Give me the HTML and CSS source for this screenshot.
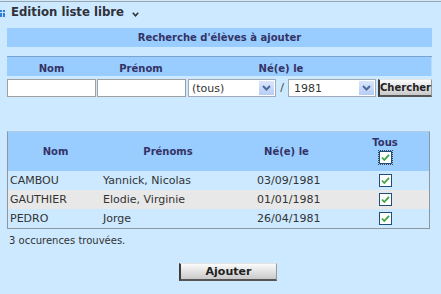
FILE: index.html
```html
<!DOCTYPE html>
<html lang="fr">
<head>
<meta charset="utf-8">
<title>Edition liste libre</title>
<link rel="stylesheet" href="styles.css">
</head>
<body>
<div class="page">
  <div class="title-row">
    <svg class="ico" width="5" height="7" viewBox="0 0 5 7"><rect width="5" height="7" fill="#2f7fd6"/><rect x="0" y="2" width="5" height="1" fill="#bfe0ff"/><rect x="2" y="0" width="1" height="7" fill="#bfe0ff"/></svg>
    <span class="title">Edition liste libre</span>
    <svg class="chev" width="7" height="5" viewBox="0 0 7 5"><polyline points="0.8,0.8 3.5,3.8 6.2,0.8" fill="none" stroke="#333" stroke-width="1.6"/></svg>
  </div>

  <div class="bar">Recherche d'élèves à ajouter</div>

  <div class="search">
    <div class="s-head">
      <div>Nom</div>
      <div>Prénom</div>
      <div>Né(e) le</div>
      <div></div>
    </div>
    <div class="s-row">
      <input class="txt first" type="text">
      <input class="txt second" type="text">
      <div class="sel sel-day"><span class="sel-val">(tous)</span><span class="sel-btn"><svg width="15" height="15" viewBox="0 0 15 15"><polyline points="4,6 7.5,9.5 11,6" fill="none" stroke="#4d6a9c" stroke-width="2"/></svg></span></div>
      <span class="slash">/</span>
      <div class="sel sel-year"><span class="sel-val">1981</span><span class="sel-btn"><svg width="15" height="15" viewBox="0 0 15 15"><polyline points="4,6 7.5,9.5 11,6" fill="none" stroke="#4d6a9c" stroke-width="2"/></svg></span></div>
      <button class="btn chercher" type="button"><span>Chercher</span></button>
    </div>
  </div>

  <div class="results">
    <div class="grid r-head">
      <div class="h">Nom</div>
      <div class="h">Prénoms</div>
      <div class="h">Né(e) le</div>
      <div class="h tous"><span>Tous</span><span class="cb focus"><svg width="13" height="13" viewBox="0 0 13 13"><rect x="0.5" y="0.5" width="12" height="12" fill="#fff" stroke="#1c4f7c"/><polyline points="3,6.5 5.3,9 10,3.8" fill="none" stroke="#3ea63e" stroke-width="1.8"/></svg></span></div>
    </div>
    <div class="grid r-row">
      <div class="nom">CAMBOU</div>
      <div class="pre">Yannick, Nicolas</div>
      <div class="date">03/09/1981</div>
      <div class="chk"><svg width="13" height="13" viewBox="0 0 13 13"><rect x="0.5" y="0.5" width="12" height="12" fill="#fff" stroke="#1c4f7c"/><polyline points="3,6.5 5.3,9 10,3.8" fill="none" stroke="#3ea63e" stroke-width="1.8"/></svg></div>
    </div>
    <div class="grid r-row alt">
      <div class="nom">GAUTHIER</div>
      <div class="pre">Elodie, Virginie</div>
      <div class="date">01/01/1981</div>
      <div class="chk"><svg width="13" height="13" viewBox="0 0 13 13"><rect x="0.5" y="0.5" width="12" height="12" fill="#fff" stroke="#1c4f7c"/><polyline points="3,6.5 5.3,9 10,3.8" fill="none" stroke="#3ea63e" stroke-width="1.8"/></svg></div>
    </div>
    <div class="grid r-row">
      <div class="nom">PEDRO</div>
      <div class="pre">Jorge</div>
      <div class="date">26/04/1981</div>
      <div class="chk"><svg width="13" height="13" viewBox="0 0 13 13"><rect x="0.5" y="0.5" width="12" height="12" fill="#fff" stroke="#1c4f7c"/><polyline points="3,6.5 5.3,9 10,3.8" fill="none" stroke="#3ea63e" stroke-width="1.8"/></svg></div>
    </div>
  </div>

  <p class="count">3 occurences trouvées.</p>

  <div class="actions"><button class="btn ajouter" type="button">Ajouter</button></div>
</div>
</body>
</html>
```
FILE: styles.css
```css
html, body {
  margin: 0;
  padding: 0;
}
body {
  background: #cce9ff;
  font-family: "DejaVu Sans", Verdana, sans-serif;
  color: #333;
  overflow: hidden;
}
.page {
  margin-top: 1px;
  border-top: 1px solid #9ea6ad;
}
.title-row {
  display: flex;
  align-items: center;
  height: 20px;
}
.ico {
  display: block;
  margin-top: 3px;
  flex: none;
}
.title {
  margin-left: 6px;
  font-family: "DejaVu Sans Condensed", "DejaVu Sans", sans-serif;
  font-weight: bold;
  font-size: 13px;
  line-height: 20px;
  color: #30323a;
}
.chev {
  display: block;
  margin-left: 8px;
  margin-top: 5px;
}
.bar {
  margin: 6px 0 0 7px;
  width: 425px;
  height: 19px;
  background: #99ccff;
  color: #333366;
  font-weight: bold;
  font-size: 10px;
  line-height: 19px;
  text-align: center;
}
.search {
  margin: 9px 0 0 7px;
  width: 425px;
  border-top: 1px solid #7ba3cf;
}
.s-head {
  display: grid;
  grid-template-columns: 89px 90px 190px 1fr;
  height: 19px;
  background: #99ccff;
  border-right: 1px solid #b8dcff;
  box-sizing: border-box;
  color: #333366;
  font-weight: bold;
  font-size: 10px;
  line-height: 12px;
  text-align: center;
}
.s-head > div {
  padding-top: 6px;
}
.s-row {
  display: flex;
  align-items: stretch;
  height: 18px;
  margin-top: 3px;
}
.txt {
  box-sizing: border-box;
  height: 18px;
  margin: 0;
  padding: 0;
  border: 1px solid #a0a0a0;
  background: #fff;
  font-size: 11px;
}
.txt.first {
  width: 89px;
  margin-right: 1px;
}
.txt.second {
  width: 89px;
  margin-right: 2px;
}
.sel {
  box-sizing: border-box;
  width: 88px;
  height: 18px;
  border: 1px solid #a0a9b5;
  background: #fff;
  display: flex;
  align-items: center;
  justify-content: space-between;
  font-size: 11px;
  color: #333;
}
.sel-day .sel-val {
  padding-left: 3px;
}
.sel-year .sel-val {
  padding-left: 5px;
}
.sel-btn {
  display: block;
  width: 15px;
  height: 14px;
  margin-right: 1px;
  background: linear-gradient(#dbe6fb, #b6cdf4);
  border: 0;
}
.sel-btn svg {
  display: block;
  margin-top: -1px;
}
.slash {
  width: 12px;
  text-align: center;
  font-size: 11px;
  line-height: 18px;
  color: #444;
}
.btn {
  box-sizing: border-box;
  margin: 0;
  padding: 0;
  background: linear-gradient(#fbfbfb, #c9c9c9);
  border-top: 1px solid #e4e4e4;
  border-right: 1px solid #9a9a9a;
  border-bottom: 2px solid #555;
  border-left: 2px solid #3c3c3c;
  color: #222;
  font-family: "DejaVu Sans", Verdana, sans-serif;
  font-weight: bold;
  cursor: pointer;
}
.chercher {
  width: 54px;
  height: 18px;
  margin-left: 2px;
  font-size: 10px;
  white-space: nowrap;
  line-height: 14px;
  display: flex;
  justify-content: center;
  align-items: center;
}
.chercher span {
  flex: none;
}
.results {
  margin: 34px 0 0 7px;
  width: 423px;
  box-sizing: border-box;
  border: 1px solid #8f969e;
  border-top-color: #b0cbe6;
}
.grid {
  display: grid;
  grid-template-columns: 95px 130px 107px 1fr;
}
.r-head {
  height: 39px;
  background: #99ccff;
  color: #333366;
  font-weight: bold;
  font-size: 10px;
  align-items: center;
  text-align: center;
}
.h.tous {
  align-self: start;
  display: flex;
  flex-direction: column;
  align-items: center;
  padding-top: 5px;
  line-height: 12px;
  padding-left: 1px;
}
.cb {
  display: block;
  margin-top: 2px;
  height: 13px;
}
.cb svg {
  display: block;
}
.cb.focus {
  outline: 1px dotted #444;
  outline-offset: 0px;
}
.r-row {
  height: 19px;
  align-items: center;
  font-size: 11px;
  color: #333;
}
.r-row.alt {
  background: #e8e8e8;
}
.nom {
  padding-left: 2px;
}
.date {
  padding-left: 24px;
}
.chk {
  display: flex;
  justify-content: center;
  padding-left: 1px;
}
.chk svg {
  display: block;
}
.count {
  margin: 5px 0 0 9px;
  font-size: 10px;
  line-height: 14px;
  color: #333;
}
.actions {
  margin-top: 15px;
  padding-left: 179px;
}
.ajouter {
  display: block;
  width: 98px;
  height: 18px;
  font-size: 11px;
  line-height: 14px;
  text-align: center;
}
```
